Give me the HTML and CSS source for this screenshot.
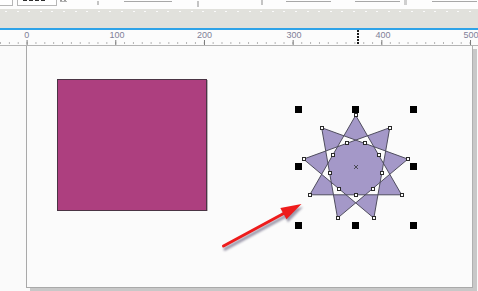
FILE: index.html
```html
<!DOCTYPE html>
<html>
<head>
<meta charset="utf-8">
<link rel="stylesheet" href="styles.css">
</head>
<body>
<div class="app">
  <div class="topbar">
    <div class="tb-box1"></div>
    <div class="tb-box2"><div class="tb-dashes"></div></div>
    <div class="tb-eq"></div>
    <div class="tb-tick tb-tick-a"></div>
    <div class="tb-line tb-line-a"></div>
    <div class="tb-tick tb-tick-b"></div>
    <div class="tb-tick tb-tick-c"></div>
    <div class="tb-line tb-line-b"></div>
    <div class="tb-line tb-line-c"></div>
    <div class="tb-tick tb-tick-d"></div>
    <div class="tb-line tb-line-d"></div>
  </div>
  <div class="band"></div>
  <div class="accent"></div>
  <div class="ruler">
    <div class="ruler-labels">
      <span class="rl" style="left:26.7px">0</span>
      <span class="rl" style="left:117px">100</span>
      <span class="rl" style="left:204.5px">200</span>
      <span class="rl" style="left:294px">300</span>
      <span class="rl" style="left:383px">400</span>
      <span class="rl" style="left:471px">500</span>
    </div>
    <div class="ruler-ticks"></div>
    <div class="cursor-mark"></div>
  </div>
  <div class="workspace">
    <div class="page">
      <svg class="canvas" viewBox="27 46 445 241" width="445" height="241" xmlns="http://www.w3.org/2000/svg">
        <defs>
          <filter id="blur" x="-20%" y="-40%" width="140%" height="180%">
            <feGaussianBlur stdDeviation="1"/>
          </filter>
        </defs>
        <rect x="57.5" y="79.5" width="149" height="131" fill="#ad3f7f" stroke="#4a3444"/>
        <line x1="207.5" y1="80" x2="207.5" y2="211" stroke="#b9b1b6"/>

        <path d="M355.7 115.3 L401.6 194.8 L309.8 194.8 Z M389.77 127.7 L373.83 218.1 L303.51 159.1 Z M407.89 159.1 L337.57 218.1 L321.63 127.7 Z"
              fill="#a498c8" fill-rule="evenodd" stroke="#4f4d5e" stroke-width="1" stroke-linejoin="miter"/>

        <g fill="#ffffff" stroke="#2a2a2a" stroke-width="1">
          <rect x="354.5" y="113.5" width="3" height="3"/>
          <rect x="388.5" y="126.5" width="3" height="3"/>
          <rect x="406.5" y="157.5" width="3" height="3"/>
          <rect x="400.5" y="193.5" width="3" height="3"/>
          <rect x="372.5" y="216.5" width="3" height="3"/>
          <rect x="336.5" y="216.5" width="3" height="3"/>
          <rect x="308.5" y="193.5" width="3" height="3"/>
          <rect x="302.5" y="157.5" width="3" height="3"/>
          <rect x="320.5" y="126.5" width="3" height="3"/>
          <rect x="363.5" y="141.5" width="3" height="3"/>
          <rect x="377.5" y="153.5" width="3" height="3"/>
          <rect x="380.5" y="171.5" width="3" height="3"/>
          <rect x="371.5" y="187.5" width="3" height="3"/>
          <rect x="354.5" y="193.5" width="3" height="3"/>
          <rect x="337.5" y="187.5" width="3" height="3"/>
          <rect x="328.5" y="171.5" width="3" height="3"/>
          <rect x="331.5" y="153.5" width="3" height="3"/>
          <rect x="345.5" y="141.5" width="3" height="3"/>
        </g>

        <path d="M354 165 L358 169 M358 165 L354 169" stroke="#4a4a55" stroke-width="1"/>

        <g fill="#000000">
          <rect x="295" y="106" width="7" height="7"/>
          <rect x="352" y="106" width="7" height="7"/>
          <rect x="410" y="106" width="7" height="7"/>
          <rect x="295" y="163" width="7" height="7"/>
          <rect x="410" y="163" width="7" height="7"/>
          <rect x="295" y="222" width="7" height="7"/>
          <rect x="352" y="222" width="7" height="7"/>
          <rect x="410" y="222" width="7" height="7"/>
        </g>

        <g transform="translate(1.5 3)" filter="url(#blur)" opacity="0.75">
          <line x1="223.5" y1="246" x2="285" y2="212.7" stroke="#7d7890" stroke-width="3.2" stroke-linecap="round"/>
          <polygon points="301.5,204 280.3,208 286.5,219.2" fill="#7d7890"/>
        </g>
        <g>
          <line x1="223.5" y1="246" x2="285" y2="212.7" stroke="#ee1c1c" stroke-width="3" stroke-linecap="round"/>
          <polygon points="301.5,204 280.3,208 286.5,219.2" fill="#ee1c1c"/>
        </g>
      </svg>
    </div>
  </div>
</div>
</body>
</html>
```

FILE: styles.css
```css
html, body {
  margin: 0;
  padding: 0;
}

body {
  background: #fafafa;
  overflow: hidden;
  font-family: "Liberation Sans", Arial, sans-serif;
}

.app {
  width: 478px;
  height: 291px;
  overflow: hidden;
}

/* cropped toolbar strip */
.topbar {
  height: 9px;
  display: flex;
  align-items: flex-start;
  background: #fdfdfd;
}

.topbar > div {
  flex: none;
}

.tb-box1 {
  margin-left: -1px;
  width: 13px;
  height: 5px;
  border-right: 1px solid #b6b6b6;
  border-bottom: 1px solid #b6b6b6;
  background: #ffffff;
}

.tb-box2 {
  margin-left: 4px;
  width: 38px;
  height: 5px;
  border: 1px solid #b6b6b6;
  border-top: 0;
  background: #ffffff;
}

.tb-dashes {
  margin: 0 0 0 5px;
  width: 22px;
  height: 1px;
  background: repeating-linear-gradient(90deg, #2e2e2e 0 4px, transparent 4px 6px);
}

.tb-eq {
  margin-left: 3px;
  width: 7px;
  height: 1px;
  border-bottom: 1px solid #b0b0b0;
  background: repeating-linear-gradient(90deg, #9a9a9a 0 2px, transparent 2px 4px);
}

.tb-tick {
  width: 2px;
  background: #c4c4c4;
}

.tb-tick-a {
  margin-left: 30px;
  margin-top: 1px;
  height: 4px;
}

.tb-tick-b {
  margin-left: 25px;
  margin-top: 1px;
  height: 6px;
}

.tb-tick-c {
  margin-left: 62px;
  height: 5px;
}

.tb-tick-d {
  margin-left: 4px;
  width: 3px;
  height: 5px;
  background: #cfcfcf;
}

.tb-line {
  height: 1px;
  margin-top: 1px;
  background: #a8a8a8;
}

.tb-line-a {
  margin-left: 25px;
  width: 48px;
}

.tb-line-b {
  margin-left: 23px;
  width: 45px;
}

.tb-line-c {
  margin-left: 24px;
  width: 45px;
}

.tb-line-d {
  margin-left: 25px;
  width: 45px;
}

/* grey band */
.band {
  height: 19px;
  background:
    repeating-linear-gradient(90deg, #fbfbfb 0 2px, transparent 2px 11.6px) 5px 2px / 100% 1px no-repeat,
    #e1e1dc;
}

.accent {
  height: 2px;
  background: #2fa3e8;
}

/* ruler */
.ruler {
  position: relative;
  height: 15px;
  background: #fcfcfc;
  border-bottom: 1px solid #b4b4b4;
}

.ruler-labels {
  position: relative;
  height: 10px;
}

.rl {
  position: absolute;
  top: 0;
  transform: translateX(-50%);
  font-size: 9px;
  line-height: 10px;
  color: #7f8098;
}

.ruler-ticks {
  height: 5px;
  background:
    linear-gradient(90deg, #7a7a7a 1px, transparent 1px) 26.6px 0 / 88.7px 100% repeat-x,
    linear-gradient(90deg, #b3b3b3 1px, transparent 1px) 26.6px 2px / 8.87px 2px repeat-x;
}

.cursor-mark {
  position: absolute;
  left: 357px;
  top: 0;
  width: 2px;
  height: 15px;
  background: repeating-linear-gradient(180deg, #1a1a1a 0 2px, transparent 2px 3px);
}

/* drawing area */
.workspace {
  height: 245px;
  background: #fafafa;
  padding-left: 26px;
}

.page {
  width: 445px;
  height: 241px;
  background: #fbfbfb;
  border-left: 1px solid #a9a9a9;
  border-right: 1px solid #b0b0b0;
  border-bottom: 1px solid #a9a9a9;
  box-shadow: 4px 3px 0 #c8c8c8;
}

.canvas {
  display: block;
}
```
